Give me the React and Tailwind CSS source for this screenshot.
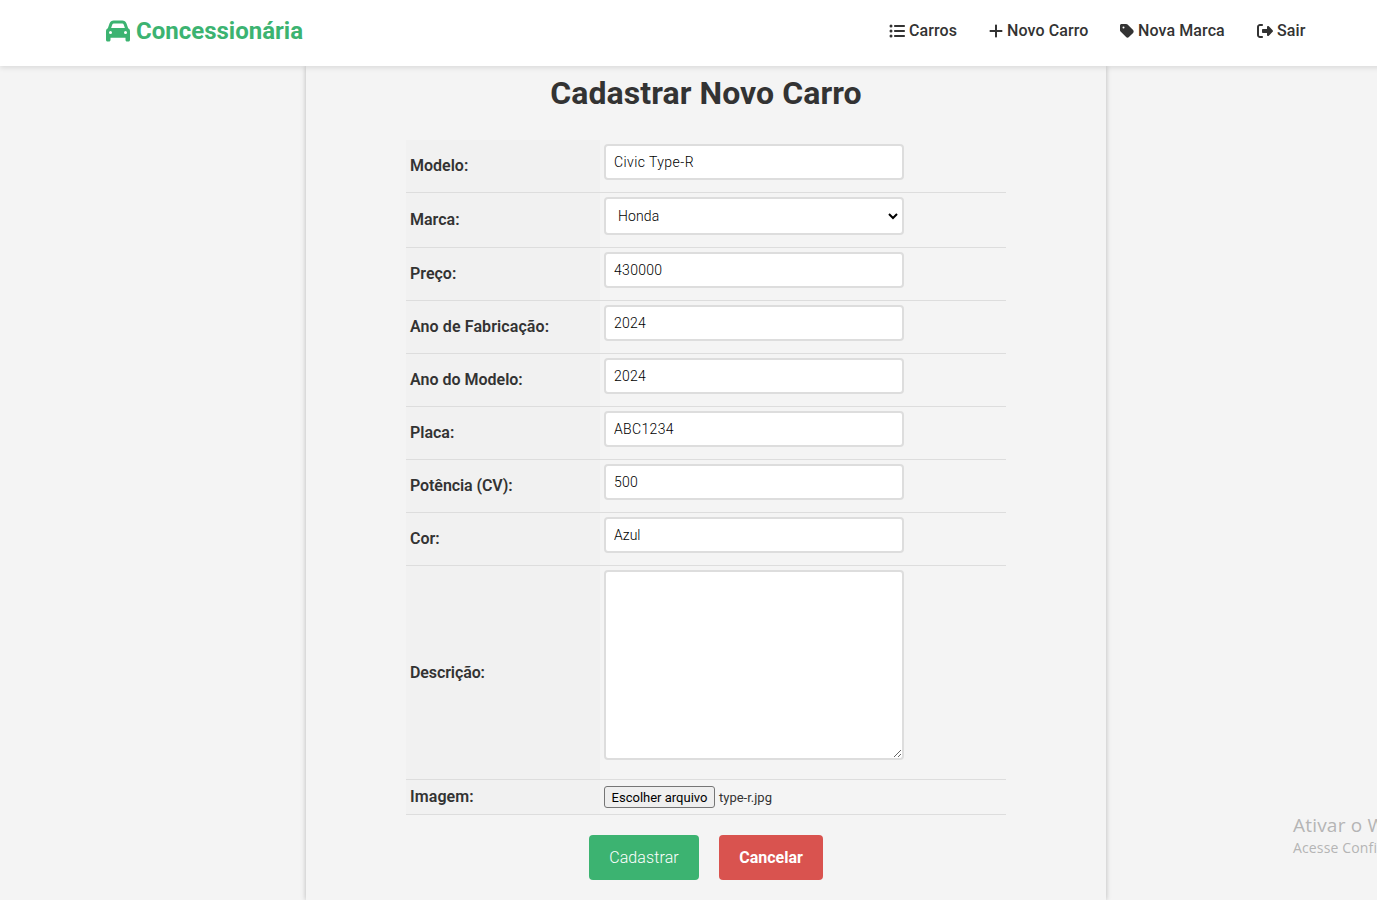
import React from 'react';
import { FaCar, FaListUl, FaPlus, FaTag, FaRightFromBracket } from 'react-icons/fa6';

const navItems = [
  { label: 'Carros', icon: FaListUl, box: 'w-[68px]', size: 'w-4' },
  { label: 'Novo Carro', icon: FaPlus, box: 'w-[99px]', size: 'w-3.5' },
  { label: 'Nova Marca', icon: FaTag, box: 'w-[105px]', size: 'w-3.5' },
  { label: 'Sair', icon: FaRightFromBracket, box: 'w-[49px]', size: 'w-4' },
];

const fieldStyle =
  'block w-[300px] rounded border-2 border-[#ddd] bg-white px-2 text-sm font-light text-black outline-none';

function Row({ label, height, spacing = '', children }) {
  return (
    <div className={`flex border-b border-[#ddd] ${height}`}>
      <div className="flex w-[194px] shrink-0 items-center bg-[#f1f1f1] px-1 font-semibold">
        <label className={`whitespace-nowrap ${spacing}`}>{label}</label>
      </div>
      <div className="pl-1 pt-1">{children}</div>
    </div>
  );
}

function TextRow({ label, value, spacing, valueSpacing = 'tracking-[0.2px]' }) {
  return (
    <Row label={label} height="h-[53px]" spacing={spacing}>
      <input className={`${fieldStyle} h-9 ${valueSpacing}`} type="text" defaultValue={value} />
    </Row>
  );
}

export default function App() {
  return (
    <div className="relative h-[900px] w-full overflow-hidden bg-[#f4f4f4] font-['Roboto',sans-serif] text-base text-[#333]">
      <div className="flex h-full w-[1412px] flex-col">
        <header className="relative z-10 h-[66px] shrink-0 bg-white shadow-[0_2px_5px_rgba(0,0,0,0.1)]">
          <div className="mx-auto flex h-[61px] w-[1200px] items-center justify-between">
            <a className="flex items-center gap-1.5 text-2xl font-bold text-[#3cb371]" href="#">
              <FaCar className="size-6" />
              <span className="whitespace-nowrap">Concessionária</span>
            </a>
            <nav className="flex gap-8">
              {navItems.map(({ label, icon: Icon, box, size }) => (
                <a key={label} href="#" className={`flex items-center gap-1 font-medium ${box}`}>
                  <Icon className={`h-4 shrink-0 ${size}`} />
                  <span className="tracking-[0.1px] whitespace-nowrap">{label}</span>
                </a>
              ))}
            </nav>
          </div>
        </header>

        <main className="mx-auto w-[800px] flex-1 shadow-[0_0_5px_rgba(0,0,0,0.25)]">
          <h1 className="pt-[7px] text-center text-[32px] leading-10 font-bold tracking-[0.07px]">Cadastrar Novo Carro</h1>
          <form className="mx-auto mt-[27px] w-[600px]">
            <TextRow label="Modelo:" value="Civic Type-R" valueSpacing="tracking-[0.42px]" />
            <Row label="Marca:" height="h-[55px]">
              <div className="relative">
                <select className={`${fieldStyle} h-[38px] appearance-none pl-3 tracking-[0.1px]`} defaultValue="Honda">
                  <option>Honda</option>
                </select>
                <svg className="pointer-events-none absolute top-[15px] right-1.5 h-2 w-2.5" viewBox="0 0 10 8" fill="none" stroke="black" strokeWidth="2">
                  <path d="M1 2l4 4 4-4" />
                </svg>
              </div>
            </Row>
            <TextRow label="Preço:" value="430000" valueSpacing="tracking-[0.3px]" />
            <TextRow label="Ano de Fabricação:" value="2024" spacing="tracking-[0.1px]" />
            <TextRow label="Ano do Modelo:" value="2024" />
            <TextRow label="Placa:" value="ABC1234" valueSpacing="tracking-[0.35px]" />
            <TextRow label="Potência (CV):" value="500" spacing="tracking-[-0.08px]" />
            <TextRow label="Cor:" value="Azul" valueSpacing="tracking-[0px]" />
            <Row label="Descrição:" height="h-[214px]" spacing="tracking-[-0.1px]">
              <textarea className={`${fieldStyle} h-[190px] resize`} />
            </Row>
            <Row label="Imagem:" height="h-[35px]" spacing="tracking-[0.1px]">
              <div className="flex items-center gap-1 pt-0.5 text-[13px]">
                <button type="button" className="h-[22px] w-[111px] rounded-[3px] border border-[#767676] bg-[#efefef] pt-px whitespace-nowrap text-black">
                  Escolher arquivo
                </button>
                <span className="pt-px whitespace-nowrap">type-r.jpg</span>
              </div>
            </Row>
            <div className="mt-5 flex justify-center gap-5 text-white">
              <button type="button" className="h-[45px] w-[110px] rounded bg-[#3cb371] font-light tracking-[0.1px]">Cadastrar</button>
              <button type="button" className="h-[45px] w-[104px] rounded bg-[#d9534f] font-bold">Cancelar</button>
            </div>
          </form>
        </main>
      </div>

      <div className="pointer-events-none absolute top-[812px] left-[1293px] font-['Open_Sans',sans-serif] whitespace-nowrap text-[#b5b5b5]">
        <p className="text-[19px] leading-[26px] tracking-[0.2px]">Ativar o W</p>
        <p className="text-sm leading-5 tracking-[0.15px]">Acesse Confi</p>
      </div>
    </div>
  );
}
